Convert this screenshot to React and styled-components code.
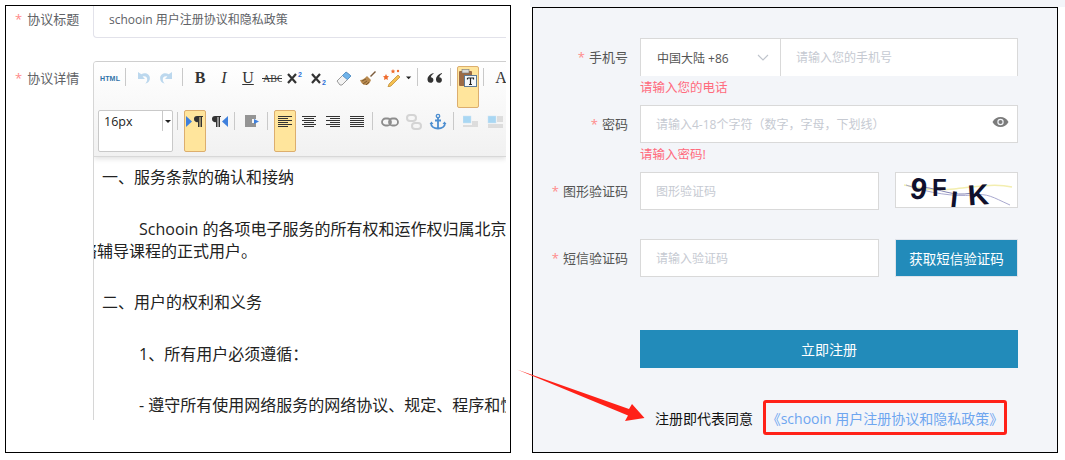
import React from 'react';
import styled, { createGlobalStyle, css } from 'styled-components';

const GlobalStyle = createGlobalStyle`
  html, body {
    margin: 0;
    padding: 0;
    background: #ffffff;
    font-family: "Open Sans", "Noto Sans CJK SC", sans-serif;
  }
  * {
    box-sizing: border-box;
  }
`;

const Page = styled.div`
  position: relative;
  display: flex;
  align-items: flex-start;
  width: 1065px;
  height: 460px;
  overflow: hidden;
`;

/* ---------- left panel ---------- */

const LeftColumn = styled.div`
  width: 530px;
  padding: 5px 0 0 5px;
`;

const LeftPanel = styled.section`
  width: 506px;
  height: 448px;
  border: 1px solid #000;
  padding-right: 4px;
  overflow: hidden;
  position: relative;
`;

const AdminRow = styled.div`
  display: flex;
  margin-bottom: ${(props) => props.gap || 0}px;
`;

const AdminLabel = styled.label`
  flex: none;
  width: 87px;
  padding: ${(props) => props.top || 0}px 0 0 9px;
  font-size: 13px;
  line-height: 16px;
  color: #606266;
  white-space: nowrap;
`;

const Star = styled.span`
  color: #ff8a8a;
  margin-right: ${(props) => props.space || 5}px;
`;

const TitleInput = styled.input`
  flex: 1;
  min-width: 0;
  height: 32px;
  border: 1px solid #e2e2ea;
  border-width: 0 0 1px 1px;
  border-bottom-left-radius: 4px;
  padding: 0 0 5px 15px;
  font: inherit;
  font-size: 12px;
  color: #606266;
  background: #fff;
  outline: none;
`;

const Editor = styled.div`
  flex: 1;
  min-width: 0;
  height: 359px;
  border-left: 1px solid #d6d6d6;
  border-top: 1px solid #cfcfcf;
  border-top-left-radius: 4px;
  overflow: hidden;
`;

const Toolbar = styled.div`
  height: 95px;
  padding: 4px 0 0 4px;
  background: linear-gradient(#ffffff, #f1f1f1);
  border-bottom: 1px solid #d8d8d8;
  box-shadow: 0 2px 5px rgba(0, 0, 0, 0.12);
  position: relative;
  overflow: hidden;
`;

const ToolRow = styled.div`
  display: flex;
  gap: 2px;
  height: 42px;
  margin-bottom: 2px;
  padding-left: ${(props) => props.inset || 0}px;
`;

const ToolButton = styled.div`
  flex: none;
  display: flex;
  justify-content: center;
  width: ${(props) => props.width || 22}px;
  height: 42px;
  padding-top: 2px;
  border: 1px solid transparent;
  border-radius: 2px;
  ${(props) =>
    props.active &&
    css`
      background: #ffe59c;
      border-color: #dcae6e;
    `}
`;

const ToolSep = styled.span`
  flex: none;
  width: 1px;
  height: 18px;
  margin: 2px 4px 0 2px;
  background: #c9c9c9;
`;

const FontSelect = styled.div`
  flex: none;
  position: relative;
  width: 75px;
  height: 42px;
  border: 1px solid #c9c9c9;
  border-radius: 2px;
  background: #fff;
  padding: 3px 0 0 5px;
  font-size: 12.5px;
  line-height: 16px;
  color: #222;
`;

const SelectDivider = styled.span`
  position: absolute;
  top: 0;
  right: 9px;
  width: 1px;
  height: 20px;
  background: #c9c9c9;
`;

const SelectCaret = styled.span`
  position: absolute;
  top: 9px;
  right: 1px;
  border: 3px solid transparent;
  border-top: 3px solid #222;
`;

const HtmlLabel = styled.span`
  margin-top: 5px;
  font-family: "Liberation Sans", sans-serif;
  font-size: 7px;
  font-weight: 700;
  line-height: 9px;
  letter-spacing: 0.2px;
  color: #2f72a8;
`;

const Letter = styled.span`
  font-family: "Liberation Serif", serif;
  font-size: 16px;
  line-height: 18px;
  color: #333;
  font-weight: ${(props) => (props.bold ? 700 : 400)};
  font-style: ${(props) => (props.italic ? 'italic' : 'normal')};
  text-decoration: ${(props) => (props.underline ? 'underline' : 'none')};
`;

const Document = styled.div`
  height: 263px;
  padding: 9px 0 0 8px;
  font-size: 16px;
  line-height: 22px;
  color: #222;
  background: #fff;
  overflow: hidden;
`;

const Para = styled.p`
  margin: 0 0 29.6px;
  white-space: nowrap;
  text-indent: ${(props) => (props.indent ? 37 : 0)}px;
`;

/* ---------- right panel ---------- */

const RightColumn = styled.div`
  flex: 1;
  height: 460px;
  padding: 7px 7px 0 2px;
  background: linear-gradient(#f3f5f9 7px, #ffffff 7px);
`;

const RightPanel = styled.section`
  width: 526px;
  height: 446px;
  border: 1px solid #000;
  background: #f3f5f9;
  padding-top: 30px;
`;

const FormItem = styled.div`
  display: flex;
  height: 67px;
  margin-bottom: ${(props) => props.gap || 0}px;
`;

const FormLabel = styled.label`
  flex: none;
  width: 95px;
  margin-right: 12px;
  height: 38px;
  line-height: 38px;
  text-align: right;
  font-size: 13px;
  color: #555;
  white-space: nowrap;
`;

const FieldColumn = styled.div`
  display: flex;
  flex-direction: column;
  width: 378px;
`;

const FieldRow = styled.div`
  display: flex;
  gap: ${(props) => props.gap || 0}px;
`;

const inputBase = css`
  height: 38px;
  border: 1px solid #d9d9d9;
  background: #fff;
  font: inherit;
  font-size: 12px;
  padding: 0 15px;
  color: #555;
  outline: none;
  min-width: 0;

  &::placeholder {
    color: #c6cad2;
    opacity: 1;
  }
`;

const Input = styled.input`
  ${inputBase}
  flex: ${(props) => (props.grow ? 1 : 'none')};
  width: ${(props) => (props.grow ? 'auto' : '239px')};
`;

const PhoneInput = styled.input`
  ${inputBase}
  flex: 1;
  border-bottom: none;
`;

const AreaSelect = styled.div`
  flex: none;
  display: flex;
  align-items: center;
  justify-content: space-between;
  width: 140px;
  height: 38px;
  padding: 0 11px 0 16px;
  background: #fff;
  border: 1px solid #d9d9d9;
  border-width: 1px 0 0 1px;
  font-size: 12px;
  color: #555;
`;

const PasswordBox = styled.div`
  position: relative;
  display: flex;
  flex: 1;
`;

const EyeSlot = styled.span`
  position: absolute;
  right: 9px;
  top: 11px;
  display: flex;
`;

const ErrorText = styled.div`
  height: 22px;
  padding-top: 2px;
  font-size: 12.5px;
  line-height: 19px;
  color: #ff6b7d;
`;

const CaptchaImage = styled.div`
  flex: none;
  width: 123px;
  height: 36px;
  border: 1px solid #d9d9d9;
  background: #fff;
  overflow: hidden;
  display: flex;
`;

const SmsButton = styled.button`
  flex: none;
  width: 123px;
  height: 38px;
  border: 1px solid #dfe3ea;
  background: #228bba;
  color: #fff;
  font: inherit;
  font-size: 13.5px;
  padding: 0;
`;

const SubmitRow = styled.div`
  padding-left: 107px;
  margin-bottom: 32px;
`;

const SubmitButton = styled.button`
  display: block;
  width: 378px;
  height: 38px;
  border: none;
  background: #228bba;
  color: #fff;
  font: inherit;
  font-size: 14px;
  padding: 0;
`;

const Agreement = styled.div`
  display: flex;
  align-items: center;
  padding-left: 122px;
  font-size: 14px;
  color: #111;
`;

const AgreementLink = styled.a`
  display: flex;
  align-items: center;
  justify-content: center;
  width: 244px;
  height: 35px;
  margin-left: 10px;
  border: 3px solid #ff2118;
  border-radius: 3px;
  color: #6ea6f0;
  white-space: nowrap;
`;

const ArrowOverlay = styled.svg`
  position: absolute;
  left: 0;
  top: 0;
  pointer-events: none;
`;

/* ---------- toolbar drawings ---------- */

const Svg = ({ children, w = 18 }) => (
  <svg width={w} height="18" viewBox={`0 0 ${w} 18`} fill="none">
    {children}
  </svg>
);

const Undo = ({ flip }) => (
  <Svg>
    <g transform={flip ? 'translate(18 0) scale(-1 1)' : undefined}>
      <path d="M4 3v7h7L8.6 7.6c2.6-1.2 5 .7 4.6 3.3-.2 1.600-1 2.700-2.200 3.600 3.300-.5 5-2.800 4.900-5.600C15.700 5 11 3 7.300 5.300z" fill="#bcd8ee" />
    </g>
  </Svg>
);

const Abc = () => (
  <Svg w={20}>
    <text x="1" y="13" fontFamily="Liberation Serif, serif" fontSize="10" fill="#333">ABC</text>
    <path d="M0 9.500h20" stroke="#333" />
  </Svg>
);

const Script = ({ up }) => (
  <Svg w={20}>
    <path d="M2 5l8 9M10 5l-8 9" stroke="#333" strokeWidth="2.200" />
    <text x="12" y={up ? 8 : 16} fontFamily="Liberation Sans, sans-serif" fontWeight="700" fontSize="7" fill="#2b6fd6">2</text>
  </Svg>
);

const Eraser = () => (
  <Svg>
    <path d="M2 12L11 3l5 4-9 9H5z" fill="#f3f3f3" stroke="#9a9a9a" />
    <path d="M7.500 6.500L11 3l5 4-3.600 3.600z" fill="#6fb3ea" stroke="#5a95c9" />
  </Svg>
);

const Brush = () => (
  <Svg>
    <path d="M16 2l-5 5 1 1 5-5z" fill="#7b5a3a" />
    <path d="M1 11c3 0 5-2 7-4l4 4c-1 3-3 5-5 5-3 0-5-2-6-5z" fill="#b98a4f" />
    <path d="M4 15l4-3M7 16l3-3M3 12l4-2" stroke="#7d5a2f" />
  </Svg>
);

const Wand = () => (
  <Svg>
    <path d="M6 15l9-9 2 2-9 9-3 1z" fill="#f5c04f" stroke="#b9852f" strokeWidth=".7" />
    <path d="M3 5l1 2 2 .3-1.500 1.500.4 2.200-1.900-1-2 1 .4-2.200L0 7.300 2 7z" fill="#ee6b2d" />
    <path d="M10 0l.7 1.500 1.600.2-1.200 1.100.3 1.600-1.400-.8-1.400.8.3-1.600-1.200-1.100 1.600-.2z" fill="#ee6b2d" />
    <circle cx="15" cy="2" r="1.200" fill="#ee6b2d" />
  </Svg>
);

const Caret = () => (
  <svg width="8" height="18" viewBox="0 0 8 18">
    <path d="M0 7h7l-3.500 3.500z" fill="#222" />
  </svg>
);

const Quote = () => (
  <Svg>
    <path d="M7.500 4C4 5 1.500 7.500 1.500 10.500c0 2 1.300 3.300 3 3.300s2.900-1.200 2.900-2.900-1.200-2.700-2.600-2.700c.3-1.400 1.300-2.700 2.700-3.400z" fill="#333" />
    <path d="M16 4c-3.500 1-6 3.500-6 6.500 0 2 1.300 3.300 3 3.300s2.900-1.200 2.900-2.900-1.200-2.700-2.600-2.700c.3-1.400 1.300-2.700 2.700-3.400z" fill="#333" />
  </Svg>
);

const Paste = () => (
  <Svg w={20}>
    <rect x="1" y="2" width="13" height="15" rx="1" fill="#9c6a45" />
    <rect x="4" y="0.500" width="7" height="3.500" fill="#d9d9d9" stroke="#777" strokeWidth=".6" />
    <rect x="6.500" y="6.500" width="12" height="11" fill="#f5f8fb" stroke="#5d7a96" />
    <path d="M9.500 9h6v1.500M12.500 9v6.500M11 15.500h3M9.500 9v1.500" stroke="#222" strokeWidth="1.200" />
  </Svg>
);

const Pilcrow = ({ rtl }) => (
  <Svg w={20}>
    {rtl ? (
      <>
        <path d="M19 3v11l-6-5.500z" fill="#3f80dc" />
        <path d="M3 6a3 3 0 0 1 3-3h6v1h-1v10H9.500V4h-1v10H7V9a3 3 0 0 1-4-3z" fill="#333" />
      </>
    ) : (
      <>
        <path d="M1 3v11l6-5.500z" fill="#3f80dc" />
        <path d="M9 6a3 3 0 0 1 3-3h6v1h-1v10h-1.500V4h-1v10H13V9a3 3 0 0 1-4-3z" fill="#333" />
      </>
    )}
  </Svg>
);

const Lines = ({ rows, dark = '#333' }) => (
  <Svg w={16}>
    {rows.map(([x, len], i) => (
      <rect key={i} x={x} y={3 + i * 2} width={len} height="1" fill={dark} />
    ))}
  </Svg>
);

const Indent = () => (
  <Svg>
    <path d="M2 3h11M2 5h11M2 7h7M2 9h7M2 11h11M2 13h11" stroke="#333" />
    <path d="M11 6l5 2.500-5 2.500z" fill="#3f80dc" />
  </Svg>
);

const Chain = ({ off }) => {
  const c = off ? '#d4d4d4' : '#8d8d8d';
  return off ? (
    <Svg>
      <rect x="2" y="2" width="9" height="6" rx="3" stroke={c} strokeWidth="2" />
      <rect x="7" y="10" width="9" height="6" rx="3" stroke={c} strokeWidth="2" />
    </Svg>
  ) : (
    <Svg>
      <rect x="1" y="5.500" width="9" height="7" rx="3.500" stroke={c} strokeWidth="1.800" />
      <rect x="8" y="5.500" width="9" height="7" rx="3.500" stroke={c} strokeWidth="1.800" />
    </Svg>
  );
};

const Anchor = () => (
  <Svg>
    <circle cx="9" cy="3" r="1.700" stroke="#4d8ed0" strokeWidth="1.300" />
    <path d="M9 5v11M6 7.500h6M2 10c0 3.500 3 5.500 7 5.500s7-2 7-5.500" stroke="#4d8ed0" strokeWidth="1.800" />
    <path d="M.5 11l2-2.500 2 2.500zM13.500 11l2-2.500 2 2.500z" fill="#4d8ed0" />
  </Svg>
);

const ImageAlign = ({ right }) => (
  <Svg w={16}>
    <rect x={right ? 1 : 0} y="3" width="8" height="7" fill="#a9d7f3" stroke="#cfe4f2" strokeWidth=".5" />
    <path
      d={right ? 'M10 4h6M10 6h6M10 8h6M1 12h15M1 14h15' : 'M9 9h6M9 11h6M0 13h15'}
      stroke="#c4c4c4"
    />
  </Svg>
);

const AlignLeft = () => <Lines rows={[[1, 14], [1, 10], [1, 14], [1, 10], [1, 14], [1, 10]]} />;
const AlignCenter = () => <Lines rows={[[1, 14], [3, 10], [1, 14], [3, 10], [1, 14], [3, 10]]} />;
const AlignRight = () => <Lines rows={[[1, 14], [5, 10], [1, 14], [5, 10], [1, 14], [5, 10]]} />;
const AlignFull = () => <Lines rows={[[1, 14], [1, 14], [1, 14], [1, 14], [1, 14], [1, 14]]} />;

const EyeIcon = () => (
  <svg width="17" height="12" viewBox="0 0 17 12">
    <path d="M.5 6C2.300 2.700 5.200 1 8.500 1s6.200 1.700 8 5c-1.800 3.300-4.700 5-8 5s-6.200-1.700-8-5z" fill="#7b7b7b" />
    <circle cx="8.500" cy="6" r="3.200" fill="#f3f5f9" />
    <circle cx="8.500" cy="6" r="2" fill="#7b7b7b" />
  </svg>
);

const Chevron = () => (
  <svg width="12" height="8" viewBox="0 0 12 8" fill="none">
    <path d="M1 1l5 5 5-5" stroke="#bfc4cc" strokeWidth="1.100" />
  </svg>
);

const Captcha = () => (
  <svg width="121" height="34" viewBox="0 0 121 34" fill="none">
    <path d="M8 12c20 4 30 6 50 4s40-6 58-2" stroke="#f3eeb0" strokeWidth="1.500" />
    <path d="M10 12c22 8 50 12 66 10s20 2 38 10" stroke="#a9a9cf" />
    <path d="M26 14c20 2 30 10 50 6" stroke="#8585b5" />
    <g fontFamily="Liberation Sans, sans-serif" fontWeight="700" fill="#10102c">
      <text x="14" y="26" fontSize="30" transform="rotate(8 22 18)">9</text>
      <text x="36" y="23" fontSize="24">F</text>
      <text x="54" y="39" fontSize="28" transform="rotate(6 60 28)">l</text>
      <text x="72" y="32" fontSize="29" transform="rotate(-4 80 24)">K</text>
    </g>
  </svg>
);

const Sep = () => <ToolSep />;

const App = () => (
  <Page>
    <GlobalStyle />
    <LeftColumn>
      <LeftPanel>
        <AdminRow gap={23}>
          <AdminLabel top={5}>
            <Star>*</Star>协议标题
          </AdminLabel>
          <TitleInput readOnly value="schooin 用户注册协议和隐私政策" />
        </AdminRow>
        <AdminRow>
          <AdminLabel top={9}>
            <Star>*</Star>协议详情
          </AdminLabel>
          <Editor>
            <Toolbar>
              <ToolRow inset={1}>
                <ToolButton><HtmlLabel>HTML</HtmlLabel></ToolButton>
                <Sep />
                <ToolButton><Undo /></ToolButton>
                <ToolButton><Undo flip /></ToolButton>
                <Sep />
                <ToolButton><Letter bold>B</Letter></ToolButton>
                <ToolButton><Letter italic>I</Letter></ToolButton>
                <ToolButton><Letter underline>U</Letter></ToolButton>
                <ToolButton><Abc /></ToolButton>
                <ToolButton><Script up /></ToolButton>
                <ToolButton><Script /></ToolButton>
                <ToolButton><Eraser /></ToolButton>
                <ToolButton><Brush /></ToolButton>
                <ToolButton><Wand /></ToolButton>
                <ToolButton width={8}><Caret /></ToolButton>
                <Sep />
                <ToolButton><Quote /></ToolButton>
                <Sep />
                <ToolButton active><Paste /></ToolButton>
                <Sep />
                <ToolButton><Letter>A</Letter></ToolButton>
              </ToolRow>
              <ToolRow>
                <FontSelect>
                  16px
                  <SelectDivider />
                  <SelectCaret />
                </FontSelect>
                <Sep />
                <ToolButton active><Pilcrow /></ToolButton>
                <ToolButton><Pilcrow rtl /></ToolButton>
                <Sep />
                <ToolButton><Indent /></ToolButton>
                <Sep />
                <ToolButton active><AlignLeft /></ToolButton>
                <ToolButton><AlignCenter /></ToolButton>
                <ToolButton><AlignRight /></ToolButton>
                <ToolButton><AlignFull /></ToolButton>
                <Sep />
                <ToolButton><Chain /></ToolButton>
                <ToolButton><Chain off /></ToolButton>
                <ToolButton><Anchor /></ToolButton>
                <Sep />
                <ToolButton><ImageAlign /></ToolButton>
                <ToolButton><ImageAlign right /></ToolButton>
              </ToolRow>
            </Toolbar>
            <Document>
              <Para>一、服务条款的确认和接纳</Para>
              <Para indent>
                Schooin 的各项电子服务的所有权和运作权归属北京
                <br />
                <span style={{ marginLeft: -37 }}>网络辅导课程的正式用户。</span>
              </Para>
              <Para>二、用户的权利和义务</Para>
              <Para indent>1、所有用户必须遵循：</Para>
              <Para indent>- 遵守所有使用网络服务的网络协议、规定、程序和惯例</Para>
            </Document>
          </Editor>
        </AdminRow>
      </LeftPanel>
    </LeftColumn>

    <RightColumn>
      <RightPanel>
        <FormItem>
          <FormLabel><Star space={4}>*</Star>手机号</FormLabel>
          <FieldColumn>
            <FieldRow>
              <AreaSelect>中国大陆 +86<Chevron /></AreaSelect>
              <PhoneInput placeholder="请输入您的手机号" />
            </FieldRow>
            <ErrorText>请输入您的电话</ErrorText>
          </FieldColumn>
        </FormItem>
        <FormItem>
          <FormLabel><Star space={4}>*</Star>密码</FormLabel>
          <FieldColumn>
            <FieldRow>
              <PasswordBox>
                <Input grow placeholder="请输入4-18个字符（数字，字母，下划线）" />
                <EyeSlot><EyeIcon /></EyeSlot>
              </PasswordBox>
            </FieldRow>
            <ErrorText>请输入密码!</ErrorText>
          </FieldColumn>
        </FormItem>
        <FormItem>
          <FormLabel><Star space={4}>*</Star>图形验证码</FormLabel>
          <FieldColumn>
            <FieldRow gap={16}>
              <Input placeholder="图形验证码" />
              <CaptchaImage><Captcha /></CaptchaImage>
            </FieldRow>
          </FieldColumn>
        </FormItem>
        <FormItem gap={24}>
          <FormLabel><Star space={4}>*</Star>短信验证码</FormLabel>
          <FieldColumn>
            <FieldRow gap={16}>
              <Input placeholder="请输入验证码" />
              <SmsButton>获取短信验证码</SmsButton>
            </FieldRow>
          </FieldColumn>
        </FormItem>
        <SubmitRow>
          <SubmitButton>立即注册</SubmitButton>
        </SubmitRow>
        <Agreement>
          注册即代表同意
          <AgreementLink>《schooin 用户注册协议和隐私政策》</AgreementLink>
        </Agreement>
      </RightPanel>
    </RightColumn>

    <ArrowOverlay width="1065" height="460" viewBox="0 0 1065 460">
      <path d="M517 369.500L629 409l3-5 12.500 14-19.500 3 3-5.500z" fill="#ff2118" />
    </ArrowOverlay>
  </Page>
);

export default App;
